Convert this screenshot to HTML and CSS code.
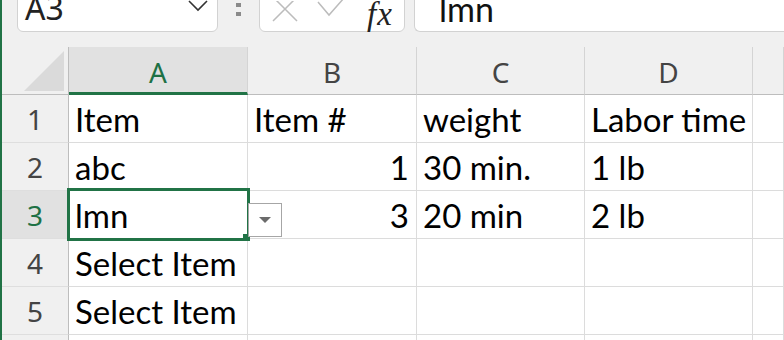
FILE: index.html
```html
<html>
<head>
    <meta charset="UTF-8">
    <title>Sheet</title>
    <link rel="stylesheet" href="styles.css">
</head>
<body>
<div class="app">
    <div class="toolbar">
        <div class="name-box">
            <span class="name-text">A3</span>
            <svg class="chevron" width="20" height="12" viewBox="0 0 20 12"><path d="M1 1 L10 10 L19 1" fill="none" stroke="#333" stroke-width="1.6"/></svg>
        </div>
        <div class="grip"><i></i><i></i></div>
        <div class="fx-box">
            <svg class="ico-x" width="26" height="22" viewBox="0 0 26 22"><path d="M1 -4 L25 20 M25 -4 L1 20" stroke="#bcbcbc" stroke-width="1.5" fill="none"/></svg>
            <svg class="ico-ok" width="28" height="18" viewBox="0 0 28 18"><path d="M1 2 L12 15 L27 -2" stroke="#bcbcbc" stroke-width="1.5" fill="none"/></svg>
            <span class="fx">fx</span>
        </div>
        <div class="formula"><span>lmn</span></div>
    </div>

    <div class="sheet">
        <div class="hd corner"><span class="tri"></span></div>
        <div class="hd col sel">A</div>
        <div class="hd col">B</div>
        <div class="hd col">C</div>
        <div class="hd col">D</div>
        <div class="hd col"></div>

        <div class="hd row">1</div>
        <div class="c">Item</div>
        <div class="c">Item #</div>
        <div class="c">weight</div>
        <div class="c">Labor time</div>
        <div class="c"></div>

        <div class="hd row">2</div>
        <div class="c">abc</div>
        <div class="c num">1</div>
        <div class="c">30 min.</div>
        <div class="c">1 lb</div>
        <div class="c"></div>

        <div class="hd row sel">3</div>
        <div class="c">lmn</div>
        <div class="c num">3</div>
        <div class="c">20 min</div>
        <div class="c">2 lb</div>
        <div class="c"></div>

        <div class="hd row">4</div>
        <div class="c">Select Item</div>
        <div class="c"></div>
        <div class="c"></div>
        <div class="c"></div>
        <div class="c"></div>

        <div class="hd row">5</div>
        <div class="c">Select Item</div>
        <div class="c"></div>
        <div class="c"></div>
        <div class="c"></div>
        <div class="c"></div>

        <div class="hd row"></div>
        <div class="c"></div>
        <div class="c"></div>
        <div class="c"></div>
        <div class="c"></div>
        <div class="c"></div>

        <div class="selection"><span class="handle"></span></div>
        <div class="dropdown"><span class="arrow"></span></div>
    </div>
</div>
</body>
</html>
```

FILE: styles.css
```css
*{ margin:0; padding:0; box-sizing:border-box;}
body{background:#fff;overflow:hidden;}
.app{width:784px;height:340px;border-left:2px solid #217346;background:#f0f0f0;overflow:hidden;}

/* formula bar */
.toolbar{display:flex;align-items:stretch;height:44px;margin-top:-12px;padding-left:15px;font-family:"Noto Sans",sans-serif;}
.name-box{width:201px;background:#fff;border:1px solid #d2d2d2;border-radius:6px;display:flex;align-items:center;justify-content:space-between;padding:0 9px 0 7px;}
.name-text{font-size:32px;color:#222;line-height:1;margin-top:-4px;}
.chevron{margin-top:-8px;}
.grip{width:41px;display:flex;flex-direction:column;align-items:center;padding-top:15px;gap:5px;}
.grip i{display:block;width:5px;height:4px;background:#8a8a8a;}
.fx-box{width:146px;background:#fff;border:1px solid #d2d2d2;border-radius:6px;display:flex;align-items:flex-start;padding:12px 0 0 12px;}
.ico-x{margin-right:19px;}
.ico-ok{margin-right:22px;margin-top:-1px;}
.fx{font-family:"Liberation Serif",serif;font-style:italic;font-size:33px;color:#222;line-height:1;margin-top:-3px;letter-spacing:1px;}
.formula{flex:1;margin-left:9px;background:#fff;border:1px solid #d2d2d2;border-right:0;border-radius:6px 0 0 6px;padding-left:24px;}
.formula span{font-family:Lato,"Liberation Sans",sans-serif;font-size:34px;color:#111;line-height:1;display:block;margin-top:3px;}

/* grid */
.sheet{position:relative;margin-top:15px;display:grid;grid-template-columns:67px 179px 169px 168px 168px 1fr;grid-template-rows:48px repeat(6,48px);}
.hd{background:#f0f0f0;font-family:"Noto Sans",sans-serif;font-size:28px;color:#444;display:flex;align-items:center;justify-content:center;}
.col{border-right:1px solid #d4d4d4;border-bottom:1px solid #bdbdbd;padding-top:2px;}
.col.sel{background:#e1e1e1;color:#1e7145;border-bottom:3px solid #217346;padding-top:5px;}
.corner{border-right:1px solid #bdbdbd;border-bottom:1px solid #bdbdbd;position:relative;}
.tri{position:absolute;right:4px;bottom:3px;width:0;height:0;border-left:40px solid transparent;border-bottom:40px solid #dadada;}
.row{border-right:1px solid #bdbdbd;border-bottom:1px solid #dedede;}
.row.sel{background:#e1e1e1;color:#1e7145;}
.c{background:#fff;border-right:1px solid #dcdcdc;border-bottom:1px solid #dcdcdc;font-family:Lato,"Liberation Sans",sans-serif;font-size:33px;color:#000;display:flex;align-items:flex-end;padding:0 7px 6px 6px;white-space:nowrap;line-height:1;}
.c.num{justify-content:flex-end;}

/* overlays */
.selection{position:absolute;left:65px;top:141px;width:183px;height:53px;border:3px solid #217346;}
.handle{position:absolute;right:-3px;bottom:-3px;width:7px;height:7px;background:#217346;}
.dropdown{position:absolute;left:246px;top:156px;width:34px;height:34px;background:#fff;border:1px solid #a6a6a6;display:flex;align-items:center;justify-content:center;}
.arrow{width:0;height:0;border-left:6px solid transparent;border-right:6px solid transparent;border-top:6px solid #6b6b6b;}
```
